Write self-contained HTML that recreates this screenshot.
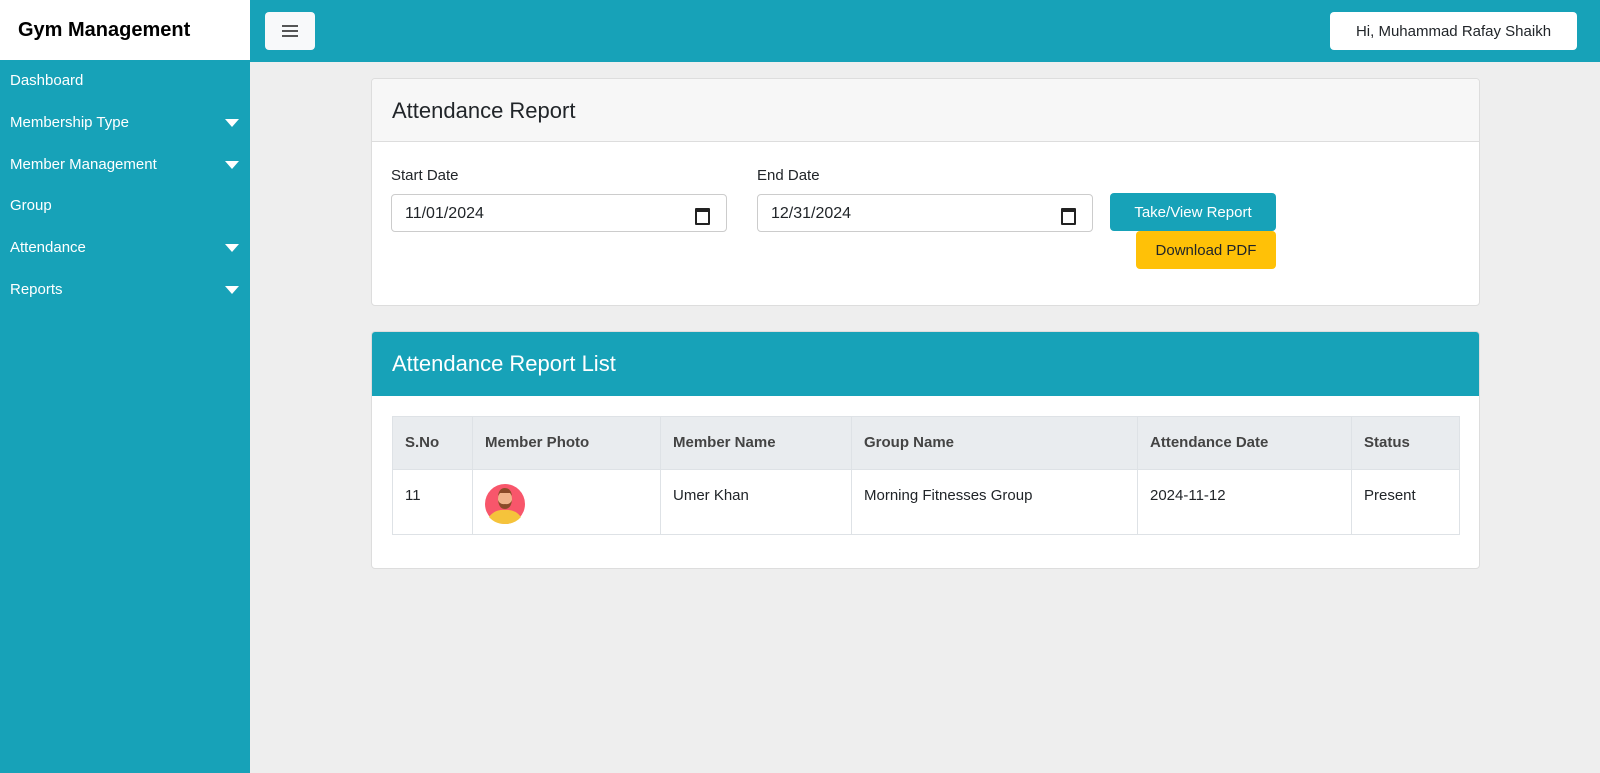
<!DOCTYPE html>
<html><head><style>
*{box-sizing:border-box;margin:0;padding:0}
body{width:1600px;height:773px;background:#eeeeee;font-family:"Liberation Sans",sans-serif;position:relative;overflow:hidden;color:#212529}
.brand{position:absolute;left:0;top:0;width:250px;height:60px;background:#fff;font-size:20px;font-weight:bold;color:#000;padding:19px 0 0 18px}
.top{position:absolute;left:250px;top:0;right:0;height:62px;background:#17a2b8}
.side{position:absolute;left:0;top:60px;width:250px;bottom:0;background:#17a2b8}
.side div{position:absolute;left:10px;right:11px;color:#fff;font-size:15px;height:20px;line-height:20px}
.side div.c:after{content:"";position:absolute;right:0;top:6px;border-left:7px solid transparent;border-right:7px solid transparent;border-top:8px solid #fff}
.ham{position:absolute;left:265px;top:12px;width:50px;height:38px;background:#f8f9fa;border-radius:4px}
.ham i{position:absolute;left:17px;width:16px;height:2px;background:#555}
.user{position:absolute;left:1330px;top:12px;width:247px;height:38px;background:#fff;border-radius:4px;font-size:15px;line-height:40px;text-align:center;color:#212529}
.card{position:absolute;left:371px;width:1109px;background:#fff;border:1px solid #ddd;border-radius:4px;overflow:hidden}
.hd{height:63px;padding:0 20px;font-size:22px;line-height:64px;border-bottom:1px solid #ddd}
label{position:absolute;font-size:15px;top:167px}
.inp{position:absolute;top:194px;height:38px;width:336px;border:1px solid #ccc;border-radius:4px;font-size:16px;line-height:38px;padding-left:13px}
.inp:after{content:"";position:absolute;right:16px;top:13px;width:11px;height:11px;border:2px solid #222;border-top-width:4px;border-radius:1px}
.btn{position:absolute;border-radius:4px;font-size:15px;text-align:center}
table{position:absolute;left:20px;top:84px;border-collapse:collapse;width:1068px;font-size:15px}
td,th{border:1px solid #dee2e6;text-align:left;padding:0 12px;vertical-align:top}
th{background:#e9ecef;height:51px;line-height:52px;color:#444}
td{height:65px;padding-top:17px}
</style></head><body>
<div class="brand">Gym Management</div>
<div class="top"></div>
<div class="ham"><i style="top:13px"></i><i style="top:18px"></i><i style="top:23px"></i></div>
<div class="user">Hi, Muhammad Rafay Shaikh</div>
<div class="side">
<div style="top:11px">Dashboard</div>
<div class="c" style="top:53px">Membership Type</div>
<div class="c" style="top:95px">Member Management</div>
<div style="top:136px">Group</div>
<div class="c" style="top:178px">Attendance</div>
<div class="c" style="top:220px">Reports</div>
</div>
<div class="card" style="top:78px;height:228px">
<div class="hd" style="background:#f7f7f7">Attendance Report</div>
</div>
<label style="left:391px">Start Date</label>
<label style="left:757px">End Date</label>
<div class="inp" style="left:391px">11/01/2024</div>
<div class="inp" style="left:757px">12/31/2024</div>
<div class="btn" style="left:1110px;top:193px;width:166px;height:38px;line-height:40px;background:#17a2b8;color:#fff">Take/View Report</div>
<div class="btn" style="left:1136px;top:231px;width:140px;height:38px;line-height:40px;background:#ffc107;color:#212529">Download PDF</div>
<div class="card" style="top:331px;height:238px">
<div class="hd" style="background:#17a2b8;color:#fff;border:0;height:64px">Attendance Report List</div>
<table>
<tr><th style="width:80px">S.No</th><th style="width:188px">Member Photo</th><th style="width:191px">Member Name</th><th style="width:286px">Group Name</th><th style="width:214px">Attendance Date</th><th>Status</th></tr>
<tr><td>11</td><td><svg width="40" height="40" viewBox="0 0 40 40" style="margin-top:-3px"><circle cx="20" cy="20" r="20" fill="#f8566b"/><path d="M4 33 Q10 25 20 26 Q30 25 36 33 Q30 40 20 40 Q10 40 4 33Z" fill="#f5c33b"/><ellipse cx="20" cy="15" rx="7" ry="9" fill="#f0b48a"/><path d="M13 12 Q14 4 20 4 Q26 4 27 12 L25 9 L15 9Z" fill="#8a4b28"/><path d="M13 16 Q14 25 20 25 Q26 25 27 16 Q25 21 20 20 Q15 21 13 16Z" fill="#8a4b28"/></svg></td><td>Umer Khan</td><td>Morning Fitnesses Group</td><td>2024-11-12</td><td>Present</td></tr>
</table>
</div>
</body></html>
